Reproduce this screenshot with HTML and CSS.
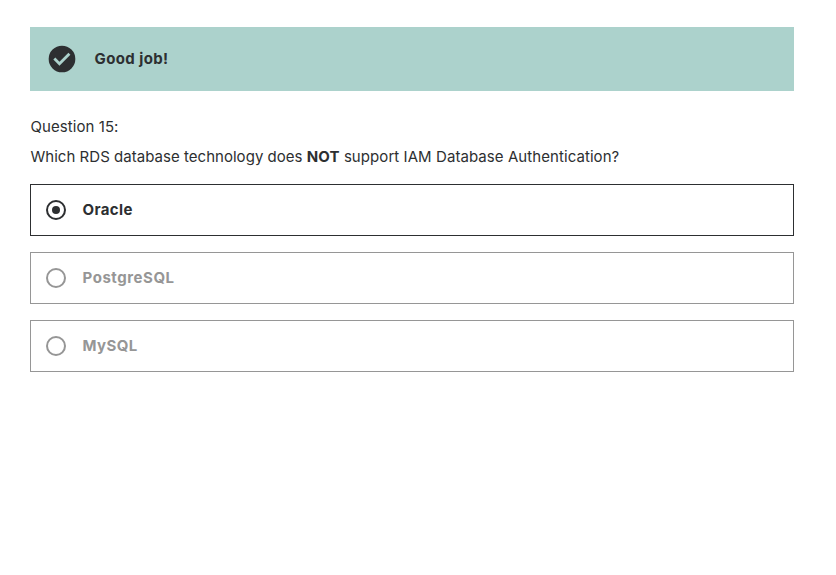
FILE: index.html
```html
<!DOCTYPE html>
<html lang="en">
<head>
<meta charset="utf-8">
<title>Quiz</title>
<link rel="stylesheet" href="styles.css">
</head>
<body>
<main class="quiz">
  <div class="alert">
    <svg class="alert-icon" viewBox="0 0 24 24" aria-hidden="true"><path fill="currentColor" d="M12 2a10 10 0 1 0 0 20 10 10 0 0 0 0-20zm-1.9 15-4.6-4.6 1.5-1.5 3.1 3.1 6.7-6.7 1.5 1.5z"/></svg>
    <span class="alert-text">Good job!</span>
  </div>
  <div class="question-number">Question 15:</div>
  <p class="question"><span class="lead">Which RDS database technology does</span> <strong>NOT</strong> support IAM Database Authentication?</p>
  <ul class="answers">
    <li class="answer selected"><span class="radio"></span><span class="label">Oracle</span></li>
    <li class="answer"><span class="radio"></span><span class="label long">PostgreSQL</span></li>
    <li class="answer"><span class="radio"></span><span class="label short">MySQL</span></li>
  </ul>
</main>
</body>
</html>
```
FILE: styles.css
```css
* { box-sizing: border-box; }
body { margin: 0; background: #fff; color: #2d2f31; font: 400 15px/22px Inter, "Liberation Sans", sans-serif; letter-spacing: 0.07px; }
.quiz { width: 764px; margin: 27px 0 0 30px; }
.alert { display: flex; align-items: center; height: 64px; padding-left: 16px; background: #acd2cc; font-weight: 700; }
.alert-icon { width: 32px; height: 32px; margin-right: 16.5px; }
.alert-text, .label { letter-spacing: 0.4px; }
.label.long { letter-spacing: 0.55px; }
.label.short { letter-spacing: 0.4px; }
.question-number { margin-top: 25px; padding-left: 0.5px; }
.question { margin: 8px 0 16px; padding-left: 0.5px; white-space: nowrap; }
.lead { letter-spacing: 0.03px; }
.answers { display: grid; gap: 16px; margin: 0; padding: 0; list-style: none; }
.answer { display: flex; align-items: center; height: 52px; padding-left: 15px; border: 1px solid #969696; color: #969696; font-weight: 700; }
.selected { border-color: #2d2f31; color: #2d2f31; }
.radio { display: grid; place-items: center; width: 20px; height: 20px; margin-right: 16.5px; border: 2px solid currentColor; border-radius: 50%; }
.selected .radio::after { content: ""; width: 8px; height: 8px; border-radius: 50%; background: currentColor; }
```
